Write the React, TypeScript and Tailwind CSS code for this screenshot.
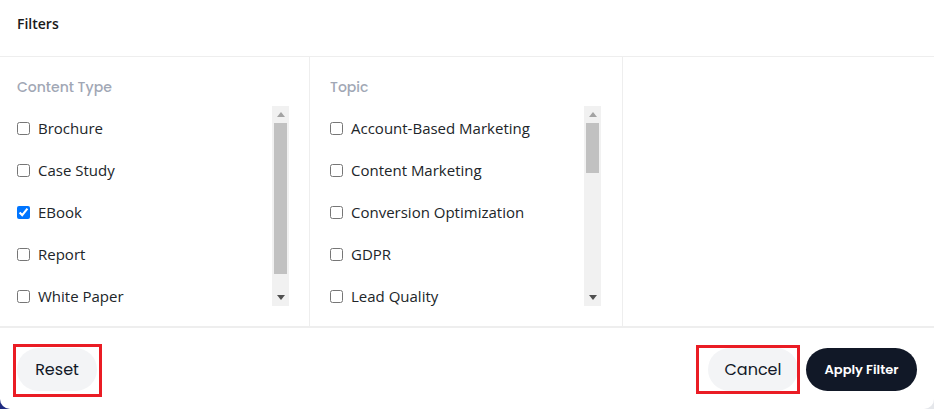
import React from "react";

const CONTENT_TYPES = [
  { label: "Brochure", checked: false },
  { label: "Case Study", checked: false },
  { label: "EBook", checked: true },
  { label: "Report", checked: false },
  { label: "White Paper", checked: false },
];

const TOPICS = [
  { label: "Account-Based Marketing", checked: false },
  { label: "Content Marketing", checked: false },
  { label: "Conversion Optimization", checked: false },
  { label: "GDPR", checked: false },
  { label: "Lead Quality", checked: false },
];

const HEADING_FONT = "font-['Poppins','Inter','Noto_Sans',sans-serif]";
const BODY_FONT = "font-['Open_Sans','Noto_Sans',sans-serif]";

function FakeScrollbar({ thumbHeight }: { thumbHeight: number }) {
  return (
    <div className="w-[17px] h-[200px] bg-[#f1f1f1] flex flex-col items-center shrink-0">
      <div className="h-[17px] w-full flex items-center justify-center">
        <svg width="8" height="5" viewBox="0 0 8 5">
          <path d="M0 5 L4 0 L8 5 Z" fill="#a3a3a3" />
        </svg>
      </div>
      <div className="w-[13px] bg-[#c1c1c1]" style={{ height: thumbHeight }} />
      <div className="flex-1" />
      <div className="h-[17px] w-full flex items-center justify-center">
        <svg width="8" height="5" viewBox="0 0 8 5">
          <path d="M0 0 L8 0 L4 5 Z" fill="#505050" />
        </svg>
      </div>
    </div>
  );
}

function FilterColumn({
  title,
  items,
  className,
  thumbHeight,
}: {
  title: string;
  items: { label: string; checked: boolean }[];
  className: string;
  thumbHeight: number;
}) {
  return (
    <div className={`border-r border-[#eeeeee] pt-[20px] ${className}`}>
      <h3 className={`${HEADING_FONT} text-[14px] leading-[20px] font-medium text-[#a1a7b5]`}>{title}</h3>
      <div className="mt-[9px] flex">
        <ul className="flex-1 h-[200px] overflow-hidden">
          {items.map((item) => (
            <li key={item.label} className="h-[42px] flex items-center gap-2 pt-[2px]">
              <input
                type="checkbox"
                defaultChecked={item.checked}
                className="w-[13px] h-[13px] shrink-0 accent-[#0075ff]"
              />
              <span className={`${BODY_FONT} text-[15px] text-[#212529]`}>{item.label}</span>
            </li>
          ))}
        </ul>
        <FakeScrollbar thumbHeight={thumbHeight} />
      </div>
    </div>
  );
}

export default function App() {
  return (
    <div className="w-[934px] h-[409px] bg-gradient-to-r from-[#1e2a80] via-white to-[#e5e7eb]">
      <div className="w-full h-full bg-white rounded-b-[10px] flex flex-col">
        {/* Header */}
        <div className="h-[57px] border-b border-[#eeeeee] px-[17px] pt-[14px]">
          <h2 className={`${BODY_FONT} text-[14px] leading-[20px] font-semibold text-[#1a1a1a]`}>Filters</h2>
        </div>

        {/* Columns */}
        <div className="h-[269px] flex">
          <FilterColumn title="Content Type" items={CONTENT_TYPES} className="w-[310px] pl-[17px] pr-[20px]" thumbHeight={151} />
          <FilterColumn title="Topic" items={TOPICS} className="w-[313px] pl-[20px] pr-[21px]" thumbHeight={50} />
        </div>

        {/* Footer */}
        <div className={`flex-1 border-t-2 border-[#eeeeee] px-[17px] pt-[20px] flex items-start justify-between ${HEADING_FONT}`}>
          <div className="relative">
            <button className="h-[43px] w-[80px] rounded-full bg-[#f3f4f6] text-[16px] font-normal text-[#111827]">
              Reset
            </button>
            <span className="absolute -left-[4px] -right-[5px] -top-[4px] -bottom-[6px] border-[3px] border-[#ea1c24] pointer-events-none" />
          </div>
          <div className="flex gap-2">
            <div className="relative">
              <button className="h-[43px] w-[90px] rounded-full bg-[#f3f4f6] text-[16px] text-[#111827]">
                Cancel
              </button>
              <span className="absolute -left-[12px] -right-[2px] -top-[3px] -bottom-[3px] border-[3px] border-[#ea1c24] pointer-events-none" />
            </div>
            <button className="h-[43px] w-[111px] rounded-full bg-[#111827] text-[13px] font-semibold text-white">
              Apply Filter
            </button>
          </div>
        </div>
      </div>
    </div>
  );
}
